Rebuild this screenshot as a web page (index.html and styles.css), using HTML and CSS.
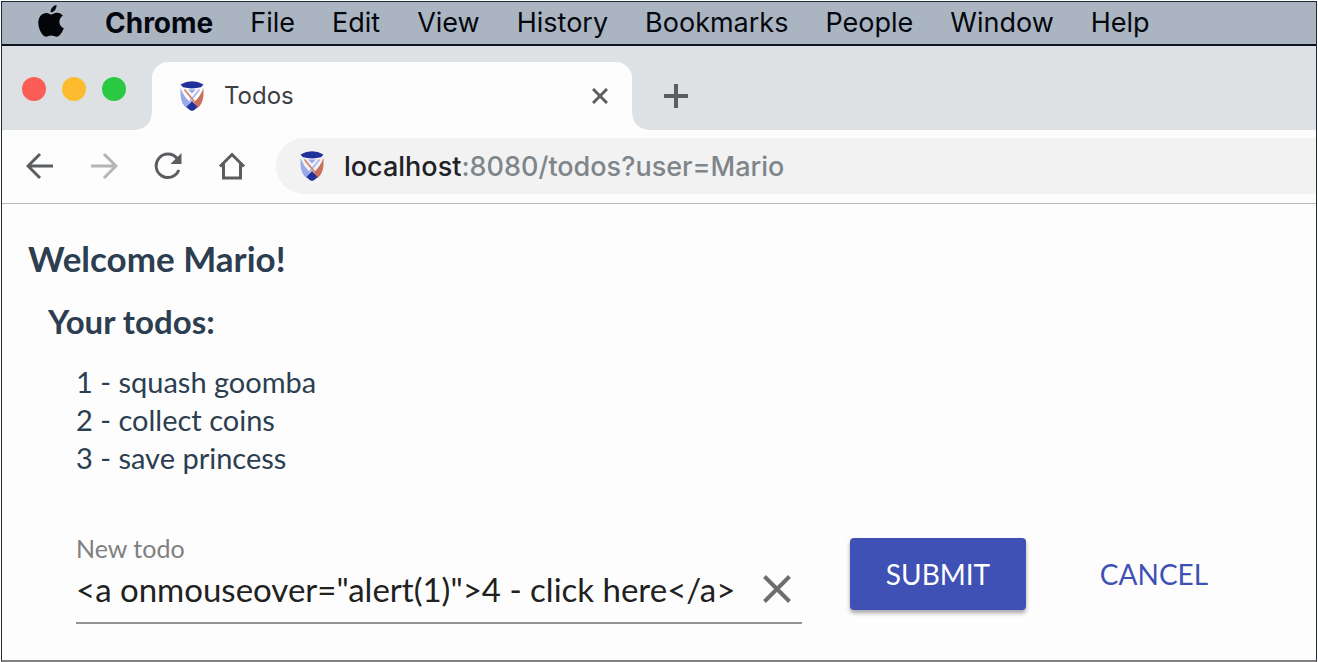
FILE: index.html
```html
<!DOCTYPE html>
<html lang="en">
<head>
<meta charset="utf-8">
<title>Todos</title>
<link rel="stylesheet" href="styles.css">
</head>
<body>
<svg class="defs" aria-hidden="true">
  <symbol id="shield" viewBox="0 0 24 30">
    <path fill="#98a8ea" d="M0.500 7 V14 Q1 23 7 27.500 L10 21.500 Q3.500 15 0.500 7Z"/>
    <path fill="#c96f5c" d="M23.500 7 V14 Q23 23 17 27.500 L14 21.500 Q20.500 15 23.500 7Z"/>
    <path fill="none" stroke="#a9b5ee" stroke-width="1.800" d="M19.500 8.500 L9 21.500"/>
    <path fill="none" stroke="#d8806e" stroke-width="1.800" d="M4.500 8.500 L15 21.500"/>
    <path fill="#98a8ea" d="M8 8.500 H16 L12 12.500Z"/>
    <path fill="#22319a" d="M0.500 3.500 Q12 -3 23.500 3.500 L21 6.300 Q12 8.500 3 6.300Z"/>
    <path fill="#22319a" d="M12 20 L17.500 26 Q14.500 29.500 12 30 Q9.500 29.500 6.500 26Z"/>
  </symbol>
</svg>
<div class="frame">
  <nav class="menubar" aria-label="Menu bar">
    <svg class="apple" viewBox="0 0 26 32" role="img" aria-label="Apple">
      <path d="M18.500 0 C18.800 4.200 15.700 7.500 12.700 7.300 C12.300 3.700 15.500 0.400 18.500 0Z M13 9.600 C14.400 9.600 16.200 7.700 19 7.800 C21.600 7.900 23.600 9 24.800 10.800 C19.700 14 20.600 21.200 25.800 23.300 C24.300 27.500 21.500 31.700 18.700 31.700 C16.600 31.700 15.800 30.500 13.300 30.500 C10.800 30.500 9.900 31.700 8 31.700 C4.600 31.700 0.300 24.500 0.300 17.800 C0.300 11.500 4.200 7.900 8.300 7.900 C10.500 7.900 12.300 9.600 13 9.600Z"/>
    </svg>
    <a class="menu app" href="#">Chrome</a>
    <a class="menu" href="#">File</a>
    <a class="menu" href="#">Edit</a>
    <a class="menu" href="#">View</a>
    <a class="menu" href="#">History</a>
    <a class="menu" href="#">Bookmarks</a>
    <a class="menu" href="#">People</a>
    <a class="menu" href="#">Window</a>
    <a class="menu" href="#">Help</a>
  </nav>
  <div class="tabstrip">
    <div class="lights">
      <button class="light red" aria-label="Close window"></button>
      <button class="light yellow" aria-label="Minimize window"></button>
      <button class="light green" aria-label="Zoom window"></button>
    </div>
    <div class="tab">
      <svg class="favicon"><use href="#shield"/></svg>
      <span class="tab-title">Todos</span>
      <button class="icon-button" aria-label="Close tab">
        <svg class="tab-close" viewBox="0 0 16 16"><path d="M1 1 L15 15 M15 1 L1 15"/></svg>
      </button>
    </div>
    <button class="icon-button new-tab" aria-label="New tab">
      <svg class="plus" viewBox="0 0 24 24"><path d="M12 0 V24 M0 12 H24"/></svg>
    </button>
  </div>
  <div class="toolbar">
    <button class="icon-button" aria-label="Back">
      <svg class="tool" viewBox="0 0 28 28"><path d="M27 14 H3 M14 2 L2 14 L14 26"/></svg>
    </button>
    <button class="icon-button" aria-label="Forward" disabled>
      <svg class="tool" viewBox="0 0 28 28"><path d="M1 14 H25 M14 2 L26 14 L14 26"/></svg>
    </button>
    <button class="icon-button" aria-label="Reload">
      <svg class="tool" viewBox="0 0 28 28"><path d="M24.800 18 A11.700 11.700 0 1 1 23 6.500"/><path class="solid" d="M27.500 1 V12 H16.500Z"/></svg>
    </button>
    <button class="icon-button" aria-label="Home">
      <svg class="tool" viewBox="0 0 28 28"><path d="M2 14.500 L14 2.500 L26 14.500 M5.500 12 V26 H22.500 V12"/></svg>
    </button>
    <div class="address">
      <svg class="favicon"><use href="#shield"/></svg>
      <span class="url">localhost<span class="path">:8080/todos?user=Mario</span></span>
    </div>
  </div>
  <main class="page">
    <h1>Welcome Mario!</h1>
    <section class="todos">
      <h2>Your todos:</h2>
      <ul>
        <li>1 - squash goomba</li>
        <li>2 - collect coins</li>
        <li>3 - save princess</li>
      </ul>
      <form class="new-todo">
        <div class="field">
          <label for="todo">New todo</label>
          <div class="entry">
            <input id="todo" type="text" value="&lt;a onmouseover=&quot;alert(1)&quot;&gt;4 - click here&lt;/a&gt;">
            <button class="icon-button" type="button" aria-label="Clear">
              <svg class="clear" viewBox="0 0 28 28"><path d="M1.500 1.500 L26.500 26.500 M26.500 1.500 L1.500 26.500"/></svg>
            </button>
          </div>
        </div>
        <button class="button submit" type="button">SUBMIT</button>
        <button class="button cancel" type="button">CANCEL</button>
      </form>
    </section>
  </main>
</div>
</body>
</html>
```
FILE: styles.css
```css
* { box-sizing: border-box; }
body {
  margin: 0;
  padding: 1px 1px 0;
  background: #fff;
  font-family: Lato, "Liberation Sans", sans-serif;
}
button {
  border: 0;
  padding: 0;
  background: none;
  font: inherit;
}
.defs { position: absolute; width: 0; height: 0; }
.frame {
  display: flex;
  flex-direction: column;
  min-height: calc(100vh - 1px);
  border: 1px solid #1c2a33;
  border-bottom: 2px solid #828080;
  background: #fdfdfd;
}

.menubar {
  display: flex;
  align-items: center;
  gap: 37px;
  height: 44px;
  padding-left: 36px;
  border-bottom: 2px solid #0c1620;
  background: #abb5c1;
  font-family: Inter, Roboto, sans-serif;
  font-size: 27px;
  line-height: 32px;
}
.apple { width: 26px; height: 32px; margin: 0 4px 4px 0; fill: #030508; }
.menu { color: #05070f; text-decoration: none; }
.app { font-size: 28px; font-weight: 700; }

.tabstrip {
  display: flex;
  align-items: flex-end;
  height: 84px;
  background: #dde1e3;
}
.lights {
  display: flex;
  gap: 16px;
  width: 150px;
  padding: 0 0 29px 20px;
}
.light { width: 24px; height: 24px; border-radius: 50%; }
.red { background: #fc5d57; }
.yellow { background: #fdbc30; }
.green { background: #29ca41; }
.tab {
  position: relative;
  display: flex;
  align-items: center;
  width: 480px;
  height: 68px;
  padding: 0 24px 0 28px;
  border-radius: 16px 16px 0 0;
  background: #fdfdfd;
}
.tab::before,
.tab::after {
  content: "";
  position: absolute;
  bottom: 0;
  width: 16px;
  height: 16px;
}
.tab::before {
  right: 100%;
  background: radial-gradient(circle at 0 0, transparent 15px, #fdfdfd 16px);
}
.tab::after {
  left: 100%;
  background: radial-gradient(circle at 100% 0, transparent 15px, #fdfdfd 16px);
}
.favicon { width: 24px; height: 30px; flex: none; }
.tab-title {
  flex: 1;
  padding: 0 0 2px 20px;
  color: #3c4043;
  font-family: Inter, Roboto, sans-serif;
  font-size: 24px;
}
.icon-button {
  display: flex;
  fill: none;
  stroke: #5b5e61;
  stroke-width: 3;
}
.icon-button:disabled { stroke: #b4b5b7; }
.tab-close { width: 16px; height: 16px; }
.new-tab { padding: 0 0 22px 32px; stroke-width: 4; }
.plus { width: 24px; height: 24px; }

.toolbar {
  display: flex;
  align-items: center;
  gap: 36px;
  height: 74px;
  padding-left: 24px;
  padding-bottom: 1px;
  border-bottom: 1px solid #b8b9ba;
}
.tool { width: 28px; height: 28px; }
.solid { fill: #5b5e61; stroke: none; }
.address {
  display: flex;
  flex: 1;
  align-items: center;
  gap: 20px;
  height: 56px;
  margin-left: -6px;
  padding-left: 24px;
  border-radius: 28px 0 0 28px;
  background: #f2f2f2;
}
.url {
  color: #202124;
  font-family: Inter, Roboto, sans-serif;
  font-size: 27px;
  font-weight: 500;
}
.path { color: #7f868b; }

.page { padding: 34px 26px 0; color: #2c3e50; }
h1, h2, ul { margin: 0; padding: 0; }
h1 { font-size: 35px; line-height: 40px; }
.todos { padding-left: 20px; }
h2 { margin-top: 24px; font-size: 33px; line-height: 38px; }
ul {
  margin-top: 23px;
  padding-left: 28px;
  list-style: none;
  font-size: 29px;
  line-height: 38px;
}
.new-todo {
  display: flex;
  align-items: flex-start;
  margin-top: 61px;
  padding-left: 28px;
}
.field {
  flex: 0 1 726px;
  margin-right: 48px;
  border-bottom: 2px solid #949494;
}
.field label {
  display: block;
  color: #808080;
  font-size: 25px;
  line-height: 20px;
}
.entry {
  display: flex;
  align-items: center;
  height: 64px;
  padding: 0 11px 2px 0;
}
.entry input {
  flex: 1;
  min-width: 0;
  border: 0;
  padding: 0;
  outline: 0;
  background: none;
  color: #212121;
  font: inherit;
  font-size: 33px;
}
.clear { width: 28px; height: 28px; stroke: #6e6e6e; stroke-width: 4; }
.button {
  width: 176px;
  height: 72px;
  border-radius: 4px;
  color: #3f51b5;
  font-size: 28px;
}
.submit {
  margin-right: 40px;
  background: #3f51b5;
  box-shadow: 0 3px 4px rgba(0, 0, 0, 0.35);
  color: #fff;
}
```
